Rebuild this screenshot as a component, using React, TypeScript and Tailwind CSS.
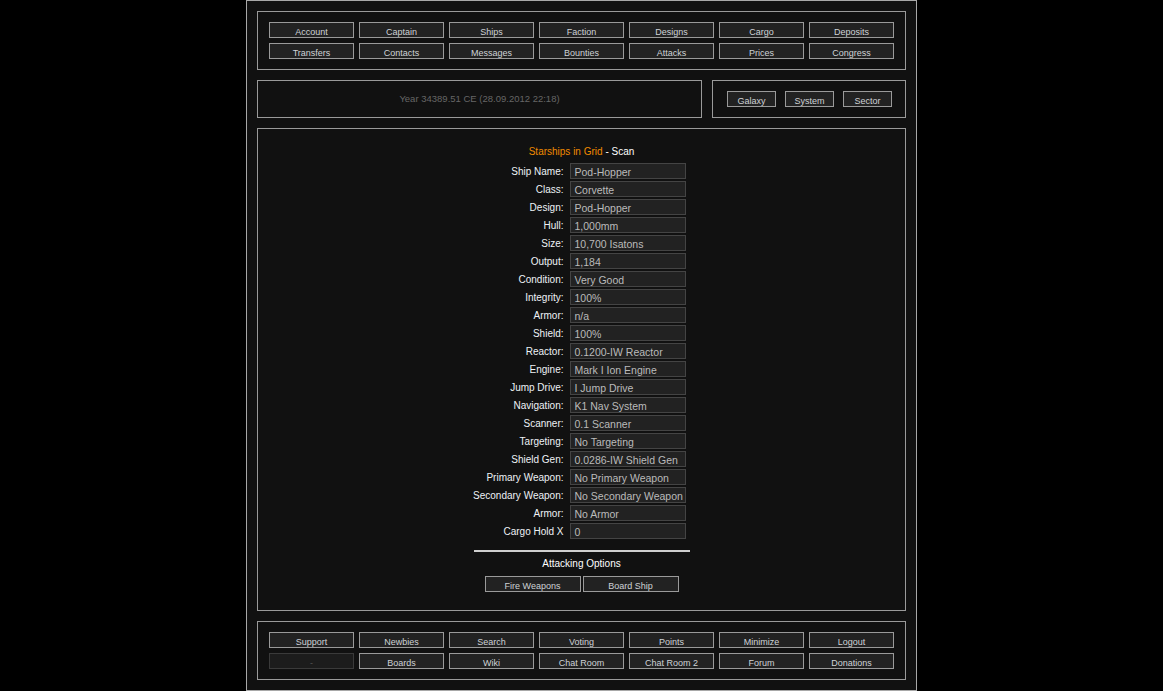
import React from "react";

const topRow1 = ["Account", "Captain", "Ships", "Faction", "Designs", "Cargo", "Deposits"];
const topRow2 = ["Transfers", "Contacts", "Messages", "Bounties", "Attacks", "Prices", "Congress"];
const botRow1 = ["Support", "Newbies", "Search", "Voting", "Points", "Minimize", "Logout"];
const botRow2 = ["-", "Boards", "Wiki", "Chat Room", "Chat Room 2", "Forum", "Donations"];

const rows: [string, string][] = [
  ["Ship Name:", "Pod-Hopper"],
  ["Class:", "Corvette"],
  ["Design:", "Pod-Hopper"],
  ["Hull:", "1,000mm"],
  ["Size:", "10,700 Isatons"],
  ["Output:", "1,184"],
  ["Condition:", "Very Good"],
  ["Integrity:", "100%"],
  ["Armor:", "n/a"],
  ["Shield:", "100%"],
  ["Reactor:", "0.1200-IW Reactor"],
  ["Engine:", "Mark I Ion Engine"],
  ["Jump Drive:", "I Jump Drive"],
  ["Navigation:", "K1 Nav System"],
  ["Scanner:", "0.1 Scanner"],
  ["Targeting:", "No Targeting"],
  ["Shield Gen:", "0.0286-IW Shield Gen"],
  ["Primary Weapon:", "No Primary Weapon"],
  ["Secondary Weapon:", "No Secondary Weapon"],
  ["Armor:", "No Armor"],
  ["Cargo Hold X", "0"],
];

function Btn({ label, w = "w-[85px]" }: { label: string; w?: string }) {
  const disabled = label === "-";
  return (
    <div
      className={`${w} h-[16px] flex items-center justify-center border text-[9px] leading-none pt-[4px] ${
        disabled ? "border-[#3a3a3a] bg-[#1c1c1c] text-[#555]" : "border-[#9a9a9a] bg-[#222] text-[#cfd2d6]"
      }`}
    >
      {label}
    </div>
  );
}

function NavBox({ r1, r2 }: { r1: string[]; r2: string[] }) {
  return (
    <div className="border border-[#9a9a9a] h-[59px] px-[11px] py-[10px] flex flex-col gap-[5px]">
      <div className="flex gap-[5px]">
        {r1.map((l) => (
          <Btn key={l} label={l} />
        ))}
      </div>
      <div className="flex gap-[5px]">
        {r2.map((l) => (
          <Btn key={l} label={l} />
        ))}
      </div>
    </div>
  );
}

export default function App() {
  return (
    <div
      className="min-h-[691px] w-full bg-black flex justify-center"
      style={{ fontFamily: '"Liberation Sans", Arial, sans-serif' }}
    >
      <div className="w-[671px] h-[691px] border border-[#a8a8a8] bg-[#111] px-[10px] pt-[10px] flex flex-col gap-[10px]">
        <NavBox r1={topRow1} r2={topRow2} />

        <div className="flex gap-[10px] h-[38px]">
          <div className="w-[445px] border border-[#9a9a9a] flex items-center justify-center text-[9.5px] text-[#666]">
            Year 34389.51 CE (28.09.2012 22:18)
          </div>
          <div className="flex-1 border border-[#9a9a9a] flex items-center pl-[14px] gap-[9px]">
            <Btn label="Galaxy" w="w-[49px]" />
            <Btn label="System" w="w-[49px]" />
            <Btn label="Sector" w="w-[49px]" />
          </div>
        </div>

        <div className="border border-[#9a9a9a] h-[483px] pt-[17px] flex flex-col items-center">
          <div className="text-[10px] leading-[12px] h-[12px]">
            <span className="text-[#f08a00]">Starships in Grid</span>
            <span className="text-white"> - Scan</span>
          </div>
          <div className="w-[226px] mt-[5px] flex flex-col gap-[2px]">
            {rows.map(([k, v], i) => (
              <div key={i} className="flex items-center h-[16px]">
                <div className="w-[95px] text-right text-[10px] text-[#eef2f6] whitespace-nowrap pt-[1px]">{k}</div>
                <div className="ml-[6px] w-[116px] h-[16px] border border-[#444] bg-[#222] text-[10.5px] leading-none text-[#bbb] flex items-center pl-[4px] pt-[2px] whitespace-nowrap overflow-hidden">
                  {v}
                </div>
              </div>
            ))}
          </div>
          <div className="w-[216px] h-[2px] bg-[#cfcfcf] mt-[11px]" />
          <div className="text-[10px] text-white mt-[6px] leading-[12px]">Attacking Options</div>
          <div className="flex gap-[2px] mt-[6px]">
            <Btn label="Fire Weapons" w="w-[96px]" />
            <Btn label="Board Ship" w="w-[96px]" />
          </div>
        </div>

        <NavBox r1={botRow1} r2={botRow2} />
      </div>
    </div>
  );
}
